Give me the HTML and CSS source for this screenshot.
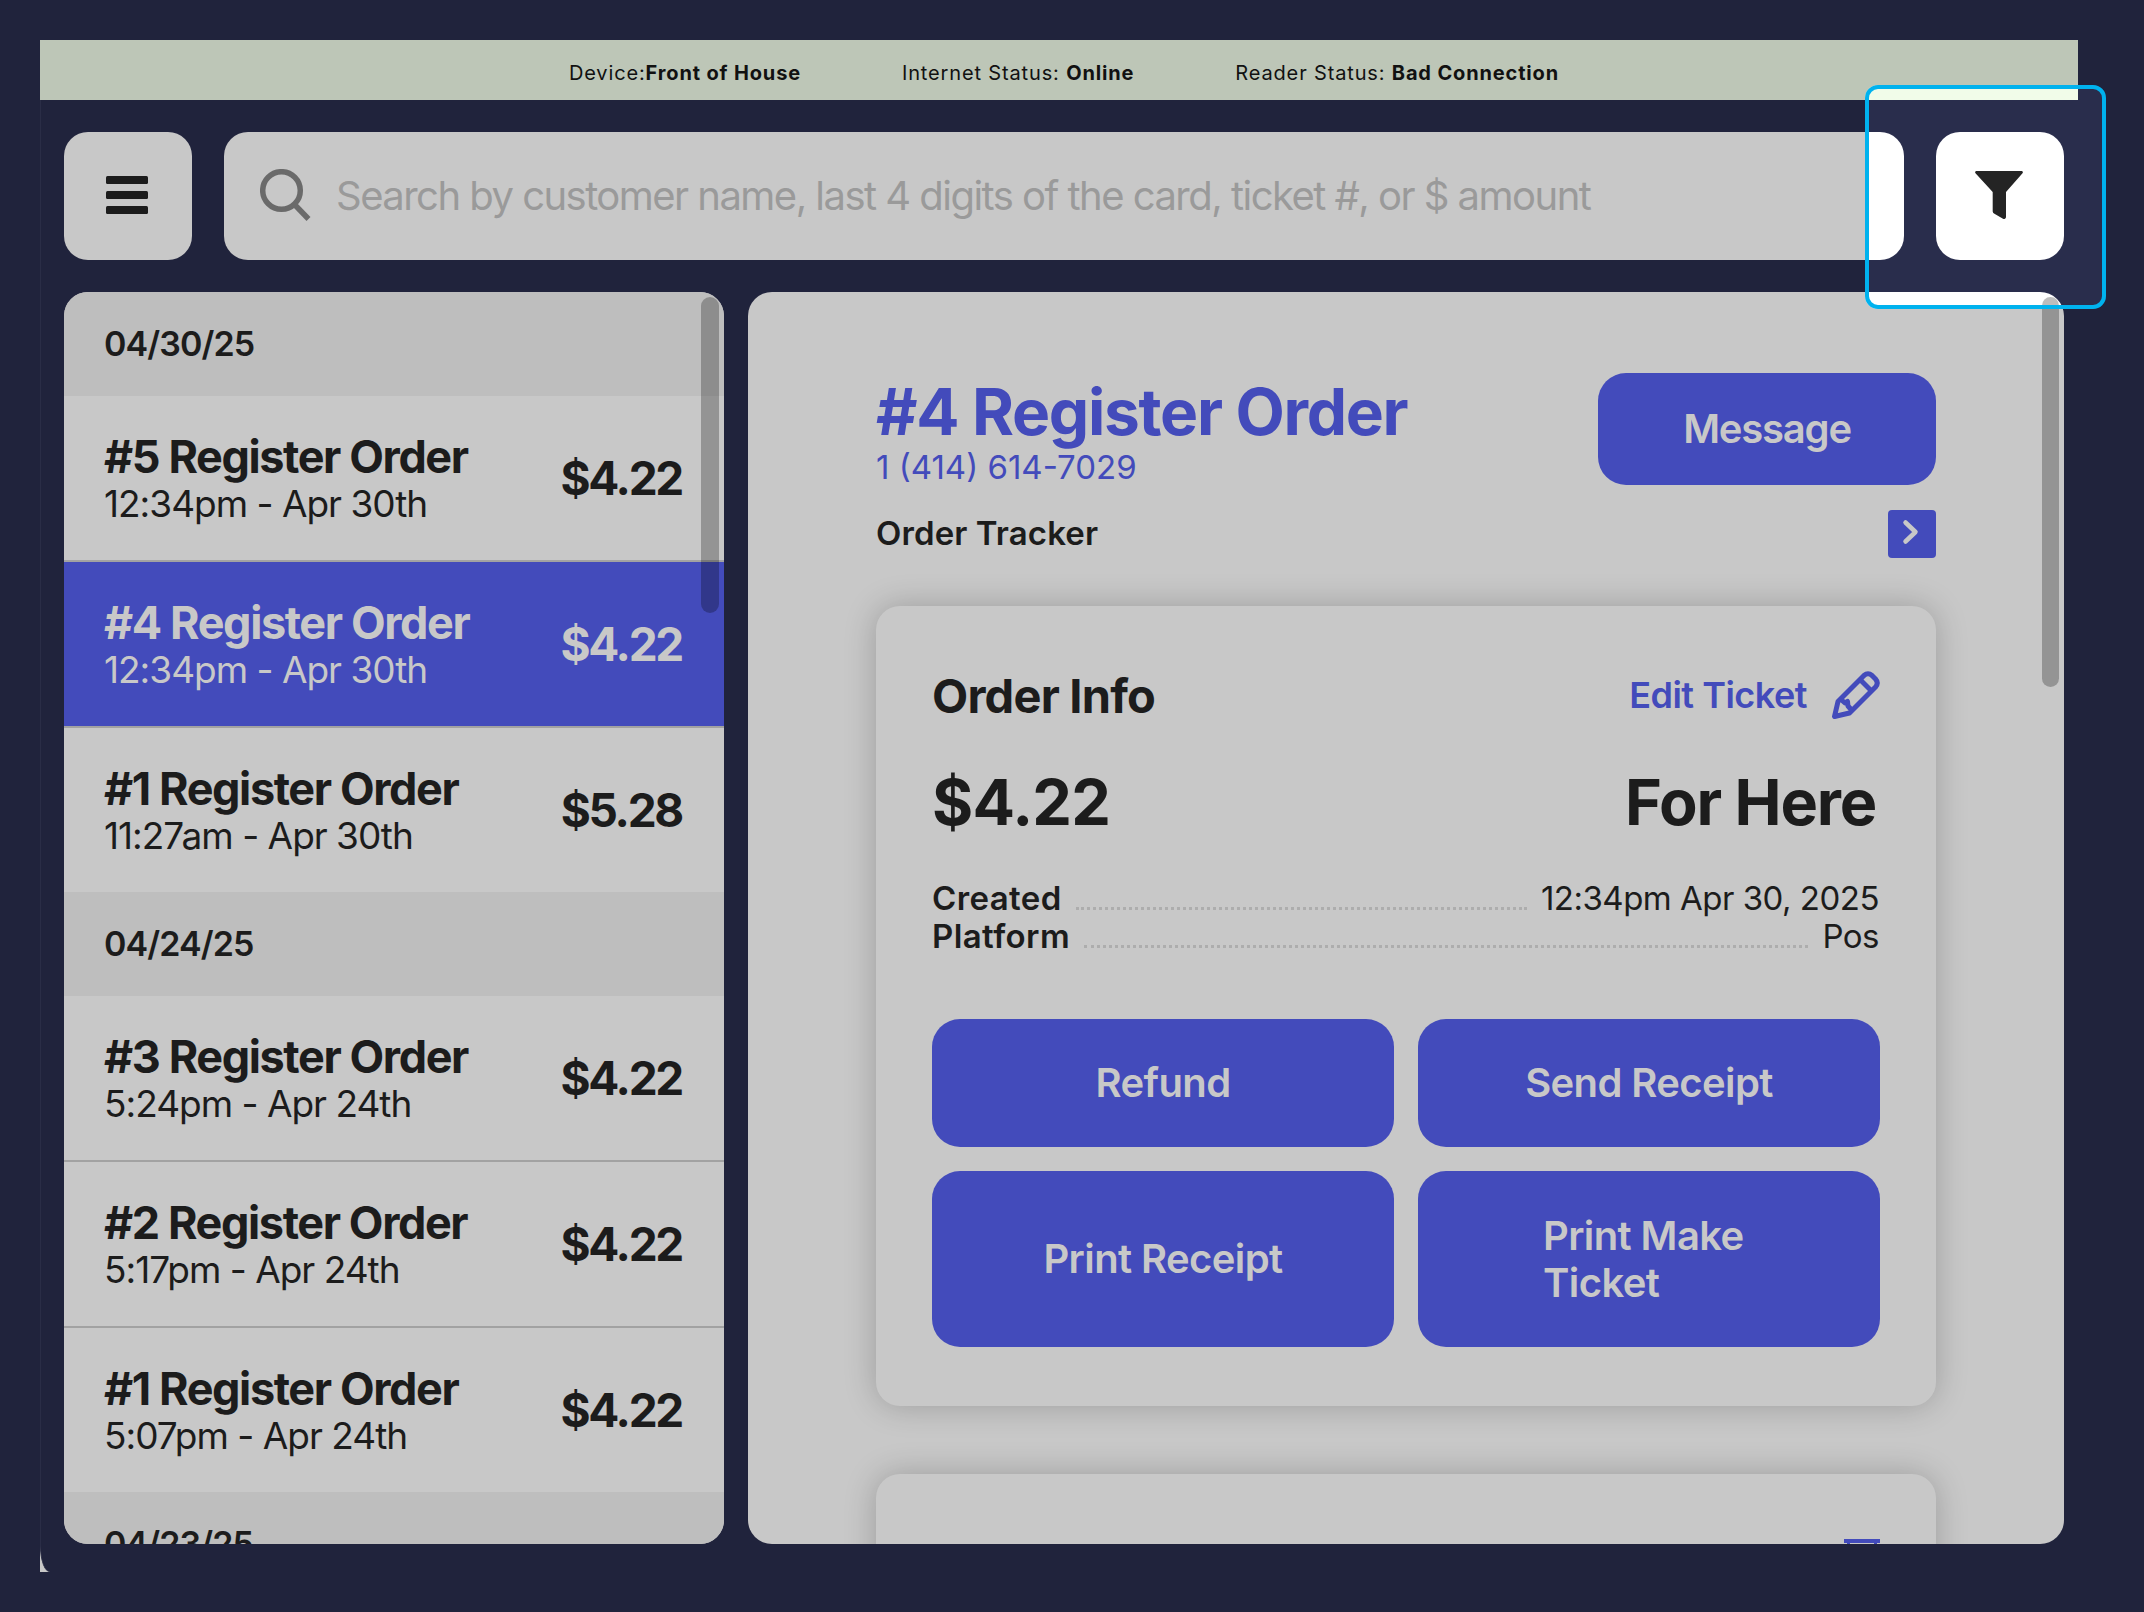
FILE: index.html
```html
<!DOCTYPE html>
<html lang="en">
<head>
<meta charset="utf-8">
<title>Orders</title>
<link rel="stylesheet" href="styles.css">
</head>
<body>
<div class="frame">
  <div class="app">
    <header class="status">
      <span class="status-item">Device:<b>Front of House</b></span>
      <span class="status-item">Internet Status: <b>Online</b></span>
      <span class="status-item">Reader Status: <b>Bad Connection</b></span>
    </header>
    <main class="content">
      <div class="toolbar">
        <button class="tool-btn" aria-label="Menu">
          <svg class="icon-bars" viewBox="0 0 42 38"><rect width="42" height="8" rx="1.5"/><rect y="15" width="42" height="8" rx="1.5"/><rect y="30" width="42" height="8" rx="1.5"/></svg>
        </button>
        <div class="search">
          <svg class="icon-search" viewBox="0 0 52 52"><circle cx="21.500" cy="21.500" r="18.800"/><path d="M35 36 L48.500 50"/></svg>
          <span class="placeholder">Search by customer name, last 4 digits of the card, ticket #, or $ amount</span>
        </div>
        <button class="tool-btn" aria-label="Filter">
          <svg class="icon-filter" viewBox="0 0 48 48"><path d="M1.5 0H46.5a1.3 1.3 0 0 1 1 2.2L31 21V46a2 2 0 0 1-3 1.7L19 42.5a3 3 0 0 1-1.300-2V21L.5 2.200A1.300 1.300 0 0 1 1.500 0Z"/></svg>
        </button>
      </div>
      <div class="panels">
        <section class="list">
          <div class="date">04/30/25</div>
          <div class="row"><div class="row-text"><div class="row-title">#5 Register Order</div><div class="row-sub">12:34pm - Apr 30th</div></div><div class="row-price">$4.22</div></div>
          <div class="row selected"><div class="row-text"><div class="row-title">#4 Register Order</div><div class="row-sub">12:34pm - Apr 30th</div></div><div class="row-price">$4.22</div></div>
          <div class="row last"><div class="row-text"><div class="row-title">#1 Register Order</div><div class="row-sub">11:27am - Apr 30th</div></div><div class="row-price">$5.28</div></div>
          <div class="date">04/24/25</div>
          <div class="row"><div class="row-text"><div class="row-title">#3 Register Order</div><div class="row-sub">5:24pm - Apr 24th</div></div><div class="row-price">$4.22</div></div>
          <div class="row"><div class="row-text"><div class="row-title">#2 Register Order</div><div class="row-sub">5:17pm - Apr 24th</div></div><div class="row-price">$4.22</div></div>
          <div class="row last"><div class="row-text"><div class="row-title">#1 Register Order</div><div class="row-sub">5:07pm - Apr 24th</div></div><div class="row-price">$4.22</div></div>
          <div class="date">04/23/25</div>
          <div class="scroll-thumb list-thumb"></div>
        </section>
        <section class="detail">
          <div class="detail-head">
            <div class="detail-heading">
              <h1 class="detail-title">#4 Register Order</h1>
              <div class="detail-phone">1 (414) 614-7029</div>
            </div>
            <button class="btn btn-message">Message</button>
          </div>
          <div class="tracker">
            <span class="tracker-label">Order Tracker</span>
            <span class="tracker-btn"><svg class="icon-chevron" viewBox="0 0 48 48"><path d="M17.500 12.500 L27.500 22 L17.500 31.500"/></svg></span>
          </div>
          <div class="card">
            <div class="card-top">
              <h2 class="card-title">Order Info</h2>
              <div class="edit">
                <span>Edit Ticket</span>
                <svg class="icon-pencil" viewBox="0 0 48 48"><path d="M2.500 45.500 L6 30.500 L32 4.500 Q36 1 40 4.500 L43.500 8 Q47 12 43.500 16 L17.500 42 Z"/><path d="M28 8.500 L39.500 20"/><path d="M8.500 28 L13 32 L15.500 30.500 L16 35 L20 39.500"/></svg>
              </div>
            </div>
            <div class="card-main">
              <div class="card-amount">$4.22</div>
              <div class="card-type">For Here</div>
            </div>
            <div class="info">
              <div class="info-row"><b>Created</b><span class="leader"></span><span class="info-value">12:34pm Apr 30, 2025</span></div>
              <div class="info-row"><b>Platform</b><span class="leader"></span><span class="info-value">Pos</span></div>
            </div>
            <div class="actions">
              <button class="btn">Refund</button>
              <button class="btn">Send Receipt</button>
              <button class="btn btn-tall">Print Receipt</button>
              <button class="btn btn-tall"><span class="btn-wrap">Print Make Ticket</span></button>
            </div>
          </div>
          <div class="card card-next">
            <svg class="icon-next" viewBox="0 0 36 10"><path d="M0 0H36V4H33V10H30V4H6V10H3V4H0Z"/></svg>
          </div>
          <div class="scroll-thumb detail-thumb"></div>
        </section>
      </div>
    </main>
  </div>
</div>
<div class="spotlight"></div>
</body>
</html>
```
FILE: styles.css
```css
* { box-sizing: border-box; }
html, body { margin: 0; padding: 0; }
body {
  width: 2144px;
  height: 1612px;
  background: #20233c;
  font-family: Inter, "Noto Sans", sans-serif;
  color: #1c1c1c;
  overflow: hidden;
  padding: 40px 66px 40px 40px;
}
h1, h2 { margin: 0; }
button { font-family: inherit; border: 0; padding: 0; }

.frame { height: 1532px; background: #c8c8c8; }
.app {
  height: 100%;
  background: #20233c;
  border-left: 1px solid #2a2d46;
  border-bottom-left-radius: 10px 26px;
  display: flex;
  flex-direction: column;
}

.status {
  height: 60px;
  flex: none;
  margin-left: -1px;
  padding: 5px 0 0 10px;
  background: #bdc6b7;
  display: flex;
  justify-content: center;
  align-items: center;
  gap: 101px;
  font-size: 20px;
  letter-spacing: 0.85px;
  color: #111;
}
.status-item b { font-weight: 700; }

.content { padding: 32px 14px 0 23px; display: flex; flex-direction: column; gap: 32px; }

.toolbar { display: flex; gap: 32px; height: 128px; }
.tool-btn {
  width: 128px;
  flex: none;
  background: #c8c8c8;
  border-radius: 24px;
  padding: 0 2px 2px 0;
  display: flex;
  align-items: center;
  justify-content: center;
}
.icon-bars { width: 42px; height: 38px; fill: #1c1c1c; }
.icon-filter { width: 48px; height: 48px; fill: #1c1c1c; }
.search {
  flex: 1;
  background: #c8c8c8;
  border-radius: 24px;
  display: flex;
  align-items: center;
  padding: 0 0 2px 36px;
  gap: 24px;
}
.icon-search { width: 52px; height: 52px; fill: none; stroke: #6a6a6a; stroke-width: 5.500; flex: none; }
.placeholder { font-size: 40px; color: #9a9a9a; letter-spacing: -1.53px; white-space: nowrap; }

.panels { display: flex; gap: 24px; height: 1252px; }

.list {
  position: relative;
  width: 660px;
  flex: none;
  background: #c8c8c8;
  border-radius: 24px;
  overflow: hidden;
}
.date {
  height: 104px;
  background: #bebebe;
  padding: 0 0 2px 40px;
  display: flex;
  align-items: center;
  font-size: 34px;
  font-weight: 600;
  letter-spacing: -0.9px;
}
.row {
  height: 166px;
  padding: 0 42px 0 40px;
  display: flex;
  align-items: center;
  justify-content: space-between;
  border-bottom: 2px solid #a2a2a2;
}
.row.last { height: 164px; border-bottom: 0; }
.row.selected { background: #434bbb; color: #c8c8c8; }
.row-text { padding-top: 2px; }
.row-title { font-size: 45px; font-weight: 700; letter-spacing: -1.4px; line-height: 48px; }
.row-sub { font-size: 37px; line-height: 45px; letter-spacing: -1px; }
.row-price { font-size: 46px; font-weight: 700; letter-spacing: -2.300px; }

.scroll-thumb { position: absolute; background: rgba(0, 0, 0, 0.26); border-radius: 9px; }
.list-thumb { left: 637px; top: 5px; width: 18px; height: 316px; }
.detail-thumb { left: 1294px; top: 5px; width: 17px; height: 390px; }

.detail {
  position: relative;
  flex: 1;
  background: #c8c8c8;
  border-radius: 24px;
  overflow: hidden;
  padding: 81px 128px 0;
}
.detail-head { display: flex; justify-content: space-between; align-items: flex-start; height: 137px; }
.detail-heading { padding-top: 1px; }
.detail-title { font-size: 64px; font-weight: 700; color: #434bbb; line-height: 76px; letter-spacing: -1.3px; }
.detail-phone { font-size: 33px; color: #434bbb; line-height: 40px; margin-top: -3px; }

.btn {
  background: #434bbb;
  color: #c8c8c8;
  border-radius: 28px;
  font-size: 40px;
  font-weight: 600;
  letter-spacing: -0.6px;
  height: 128px;
  padding-bottom: 2px;
}
.btn-message { width: 338px; height: 112px; letter-spacing: -1.2px; }
.btn-tall { height: 176px; }
.btn-wrap { display: block; width: 212px; margin: 2px auto 0; text-align: left; line-height: 47px; }

.tracker { display: flex; justify-content: space-between; align-items: center; height: 48px; }
.tracker-label { font-size: 33px; font-weight: 600; letter-spacing: 0.1px; padding-bottom: 2px; }
.tracker-btn {
  width: 48px;
  height: 48px;
  background: #434bbb;
  border-radius: 4px;
  display: flex;
}
.icon-chevron { width: 48px; height: 48px; fill: none; stroke: #c8c8c8; stroke-width: 4.500; stroke-linecap: round; stroke-linejoin: round; }

.card {
  margin-top: 48px;
  background: #c8c8c8;
  border-radius: 24px;
  box-shadow: 0 0 32px rgba(0, 0, 0, 0.22);
  padding: 56px;
  height: 800px;
}
.card-top { display: flex; justify-content: space-between; align-items: center; height: 66px; }
.card-title { font-size: 47px; font-weight: 700; letter-spacing: -0.800px; }
.edit { display: flex; align-items: center; gap: 25px; color: #434bbb; font-size: 36px; font-weight: 600; letter-spacing: -0.5px; }
.icon-pencil { width: 48px; height: 48px; fill: none; stroke: #434bbb; stroke-width: 5; stroke-linejoin: round; }
.card-main { display: flex; justify-content: space-between; align-items: center; margin-top: 41px; height: 66px; padding-right: 4px; }
.card-amount { font-size: 63px; font-weight: 700; letter-spacing: -0.8px; }
.card-type { font-size: 63px; font-weight: 700; letter-spacing: -1.2px; }
.info { margin-top: 44px; }
.info-row { display: flex; align-items: baseline; gap: 14px; font-size: 33px; line-height: 38px; padding-right: 1px; }
.info-row b { font-weight: 600; letter-spacing: 0.4px; }
.info-value { letter-spacing: -0.5px; }
.leader { flex: 1; border-bottom: 3px dotted #adadad; }
.actions { margin-top: 64px; display: grid; grid-template-columns: 1fr 1fr; gap: 24px; }

.card-next { position: relative; height: 300px; margin-top: 68px; }
.icon-next { position: absolute; right: 56px; top: 65px; width: 36px; height: 10px; fill: #434bbb; }

.spotlight {
  position: absolute;
  left: 1865px;
  top: 85px;
  width: 241px;
  height: 224px;
  border: 4px solid #00b2ee;
  border-radius: 13px;
  backdrop-filter: brightness(1.275);
}
```
